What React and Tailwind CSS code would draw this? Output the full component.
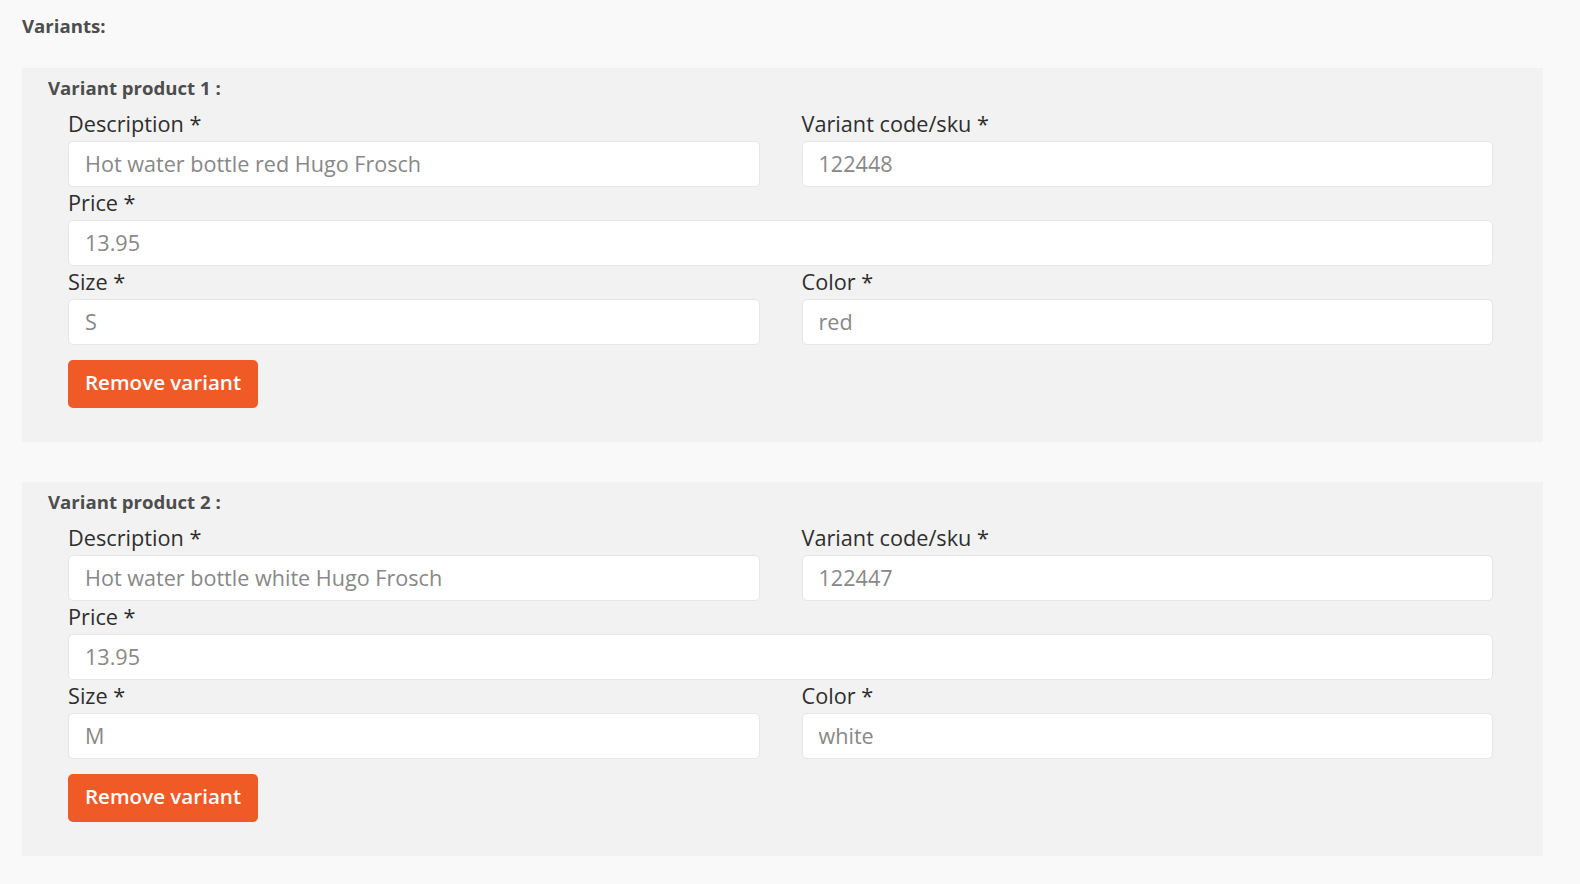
import React from "react";

const variants = [
  { n: 1, description: "Hot water bottle red Hugo Frosch", sku: "122448", price: "13.95", size: "S", color: "red" },
  { n: 2, description: "Hot water bottle white Hugo Frosch", sku: "122447", price: "13.95", size: "M", color: "white" },
];

function Field({ label, value, full }) {
  return (
    <div className={full ? "col-span-2 flex flex-col" : "flex flex-col"}>
      <label className="h-[33px] leading-[31px] text-[21.7px] text-[#2e2e2e] whitespace-nowrap">{label}</label>
      <input
        readOnly
        defaultValue={value}
        className="h-[46px] w-full rounded-[5px] border border-[#e6e6e6] bg-white px-[16px] pb-[2px] text-[21.6px] text-[#888888] outline-none"
      />
    </div>
  );
}

function Variant({ v }) {
  return (
    <div className="w-[1521px] bg-[#f2f2f2] pt-[6px] pl-[26px] pb-[34px]">
      <div className="h-[28px] leading-[28px] text-[18.6px] font-bold text-[#4d4d4d] mb-[6px]">
        Variant product {v.n} :
      </div>
      <div className="ml-[20px] w-[1425px]">
        <div className="grid grid-cols-2 gap-x-[42px]">
          <Field label="Description *" value={v.description} />
          <Field label="Variant code/sku *" value={v.sku} />
          <Field label="Price *" value={v.price} full />
          <Field label="Size *" value={v.size} />
          <Field label="Color *" value={v.color} />
        </div>
        <button className="mt-[15px] flex h-[48px] w-[190px] items-center justify-center rounded-[5px] bg-[#f05a27] pb-[4px] text-[20.6px] font-semibold text-white">
          Remove variant
        </button>
      </div>
    </div>
  );
}

export default function App() {
  return (
    <div
      className="min-h-screen bg-[#f9f9f9] pl-[22px] pt-[12px]"
      style={{ fontFamily: '"Open Sans", "Liberation Sans", sans-serif' }}
    >
      <div className="h-[28px] leading-[28px] text-[18.6px] font-bold text-[#4d4d4d] mb-[28px]">Variants:</div>
      <div className="flex flex-col gap-[40px]">
        {variants.map((v) => (
          <Variant key={v.n} v={v} />
        ))}
      </div>
    </div>
  );
}
